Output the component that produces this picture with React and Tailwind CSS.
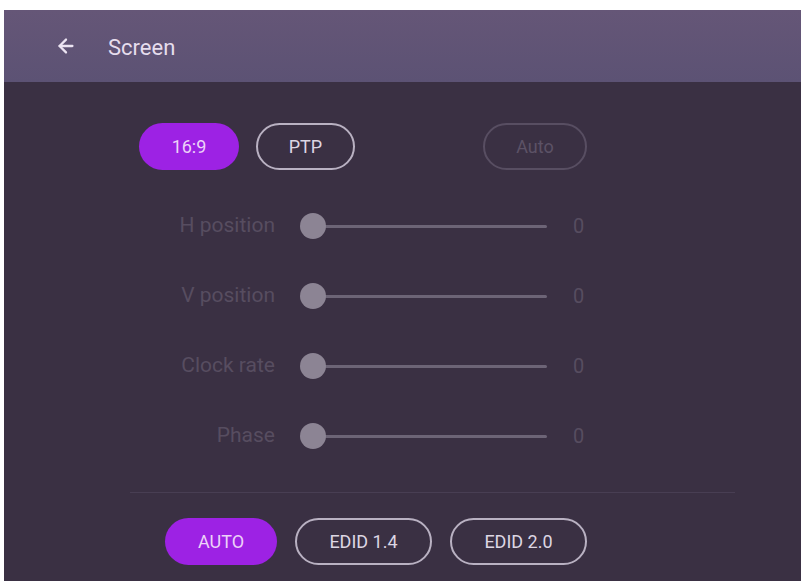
import { ArrowLeft } from 'lucide-react';

const sliders = ['H position', 'V position', 'Clock rate', 'Phase'];

function Pill({ children, variant = 'outline', className = '' }) {
  const styles = {
    active: 'bg-[#9d22e4] text-[#ecd2f8]',
    outline: 'border-2 border-[#b9b1c2] text-[#ddd6e3]',
    disabled: 'border-2 border-[#584e62] text-[#5c5266]',
  };
  return (
    <div
      className={`flex h-[47px] items-center justify-center rounded-full text-[18px] ${styles[variant]} ${className}`}
    >
      {children}
    </div>
  );
}

function SliderRow({ label }) {
  return (
    <div className="flex h-[70px] items-center">
      <div className="w-[136px] text-right text-[21px] text-[#574d60]">{label}</div>
      <div className="relative ml-[25px] flex h-[26px] w-[247px] items-center">
        <div className="ml-[13px] h-[3px] flex-1 rounded-full bg-[#6c6476]" />
        <div className="absolute left-0 top-0 h-[26px] w-[26px] rounded-full bg-[#8c8494]" />
      </div>
      <div className="ml-[26px] text-[20px] text-[#574d60]">0</div>
    </div>
  );
}

export default function App() {
  return (
    <div
      className="h-[584px] w-[803px] bg-white pl-[4px] pr-[2px] pt-[10px] pb-[3px]"
      style={{ fontFamily: 'Roboto, "Noto Sans", sans-serif' }}
    >
      <div className="flex h-full flex-col bg-[#3a3043]">
        <header className="flex h-[72px] items-center bg-gradient-to-b from-[#655677] to-[#5c5274] pl-[51px]">
          <ArrowLeft size={22} strokeWidth={2.5} className="text-[#ece4f2]" />
          <span className="ml-[31px] mt-[2px] text-[22px] text-[#e6dded]">Screen</span>
        </header>

        <div className="flex flex-1 flex-col pl-[135px]">
          <div className="mt-[41px] flex">
            <Pill variant="active" className="w-[100px]">16:9</Pill>
            <Pill className="ml-[17px] w-[99px]">PTP</Pill>
            <Pill variant="disabled" className="ml-[128px] w-[104px]">Auto</Pill>
          </div>

          <div className="mt-[21px] flex flex-col">
            {sliders.map((s) => (
              <SliderRow key={s} label={s} />
            ))}
          </div>
        </div>

        <div className="ml-[126px] mr-[66px] mt-auto h-px bg-[#483e53]" />

        <div className="flex gap-[18px] pl-[161px] pb-[16px] pt-[25px]">
          <Pill variant="active" className="w-[112px]">AUTO</Pill>
          <Pill className="w-[137px]">EDID 1.4</Pill>
          <Pill className="w-[137px]">EDID 2.0</Pill>
        </div>
      </div>
    </div>
  );
}
